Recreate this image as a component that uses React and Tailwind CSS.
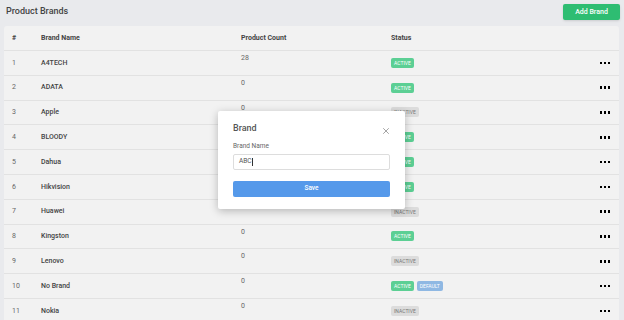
import { X } from "lucide-react";

const brands = [
  { name: "A4TECH", count: "28", active: true },
  { name: "ADATA", count: "0", active: true },
  { name: "Apple", count: "0", active: false },
  { name: "BLOODY", count: "0", active: true },
  { name: "Dahua", count: "0", active: true },
  { name: "Hikvision", count: "0", active: true },
  { name: "Huawei", count: "", active: false },
  { name: "Kingston", count: "0", active: true },
  { name: "Lenovo", count: "0", active: false },
  { name: "No Brand", count: "0", active: true, isDefault: true },
  { name: "Nokia", count: "0", active: false },
];

function Badge({ active }) {
  return active ? (
    <span className="inline-block rounded-[2px] bg-[#5ccf94] px-[3px] py-[2px] text-[5px] leading-[6px] text-white">
      ACTIVE
    </span>
  ) : (
    <span className="inline-block rounded-[2px] bg-[#dcdcdc] px-[3px] py-[2px] text-[5px] leading-[6px] text-[#777]">
      INACTIVE
    </span>
  );
}

function Dots() {
  return (
    <div className="flex gap-[1.5px]">
      <span className="h-[2.5px] w-[2.5px] bg-black" />
      <span className="h-[2.5px] w-[2.5px] bg-black" />
      <span className="h-[2.5px] w-[2.5px] bg-black" />
    </div>
  );
}

export default function App() {
  return (
    <div
      className="relative h-[320px] w-[624px] overflow-hidden bg-[#e9eaed] text-[#333]"
      style={{ fontFamily: "Roboto, 'Liberation Sans', sans-serif" }}
    >
      {/* Header */}
      <div className="flex h-[26px] items-center justify-between pl-[6px] pr-[4px]">
        <h1 className="mt-[-2px] text-[9px] font-medium text-[#444]">Product Brands</h1>
        <button className="mt-[-2px] h-[16px] w-[57px] rounded-[2px] bg-[#2ebd72] text-[7px] font-medium text-white shadow-sm">
          Add Brand
        </button>
      </div>

      {/* Table */}
      <div className="ml-[4px] mr-[5px] rounded-t-[3px] bg-[#f2f2f2] text-[7px]">
        <div className="grid h-[25px] grid-cols-[29px_200px_150px_1fr] items-center border-b border-[#e2e2e2] pl-[8px] font-bold text-[#444]">
          <span>#</span>
          <span>Brand Name</span>
          <span>Product Count</span>
          <span>Status</span>
        </div>
        {brands.map((b, i) => (
          <div
            key={b.name}
            className="grid h-[24.8px] grid-cols-[29px_200px_150px_1fr_auto] items-center border-b border-[#e2e2e2] pl-[8px] pr-[9px]"
          >
            <span className="text-[#666]">{i + 1}</span>
            <span className="font-medium text-[#444]">{b.name}</span>
            <span className="self-start pt-[2px] text-[#666]">{b.count}</span>
            <span className="flex gap-[3px]">
              <Badge active={b.active} />
              {b.isDefault && (
                <span className="inline-block rounded-[2px] bg-[#8fb8e3] px-[3px] py-[2px] text-[5px] leading-[6px] text-white">
                  DEFAULT
                </span>
              )}
            </span>
            <Dots />
          </div>
        ))}
      </div>

      {/* Modal */}
      <div className="absolute left-[218px] top-[111px] h-[98px] w-[187px] rounded-[2px] bg-white px-[15px] pt-[11px] shadow-[0_2px_8px_rgba(0,0,0,0.25)]">
        <div className="flex items-center justify-between">
          <span className="text-[9px] font-medium text-[#555]">Brand</span>
          <X size={10} strokeWidth={1.3} className="mr-[-1px] mt-[4px] text-[#555]" />
        </div>
        <div className="mt-[6px] text-[6.5px] text-[#666]">Brand Name</div>
        <div className="mt-[2px] flex h-[16px] items-center rounded-[2px] border border-[#ddd] px-[5px] text-[6.5px] text-[#555]">
          ABC<span className="ml-[0.5px] h-[8px] w-[0.6px] bg-[#333]" />
        </div>
        <button className="mt-[11px] h-[16px] w-full rounded-[2px] bg-[#5599ea] text-[6.5px] font-medium text-white">
          Save
        </button>
      </div>
    </div>
  );
}
